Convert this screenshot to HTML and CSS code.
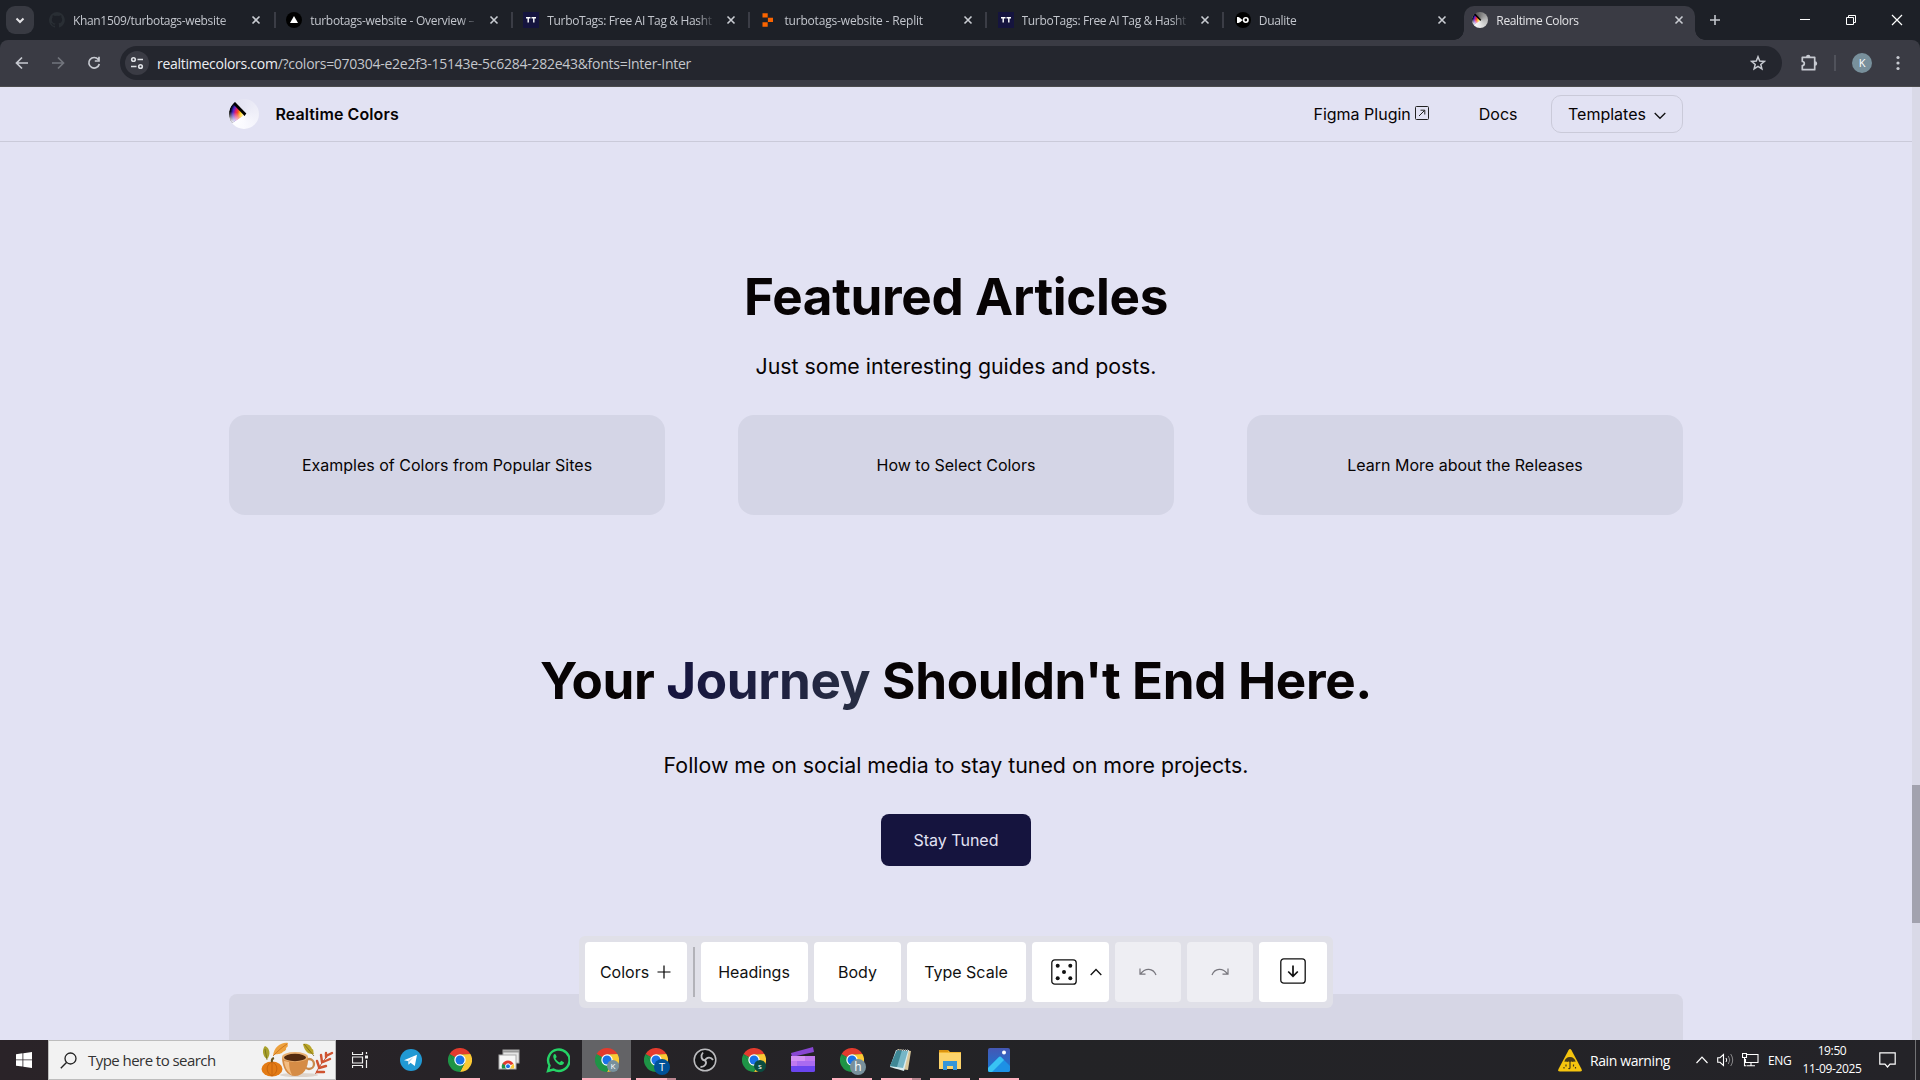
FILE: index.html
```
<!DOCTYPE html>
<html lang="en">
<head>
<meta charset="utf-8">
<title>Realtime Colors</title>
<link rel="stylesheet" href="styles.css">
</head>
<body>
<svg class="defs" width="0" height="0">
  <defs>
    <symbol id="close" viewBox="0 0 16 16"><path d="M4.500 4.500l7 7M11.500 4.500l-7 7" fill="none" stroke="currentColor" stroke-width="1.600"/></symbol>
    <symbol id="chrome" viewBox="0 0 24 24">
      <path d="M12 12 1.600 6A12 12 0 0 1 22.400 6L12 6.500z" fill="#e33b2e"/>
      <path d="M12 12 12 6.500 22.400 6A12 12 0 0 1 12 24L16.800 14.700z" fill="#fcc934"/>
      <path d="M1.600 6A12 12 0 0 0 12 24L16.800 14.800 12 12 7.200 14.700z" fill="#1e9446"/>
      <path d="M1.600 6 12 6.300V12z" fill="#e33b2e"/>
      <path d="M1.600 6 7.200 15.500 12 12z" fill="#1e9446"/>
      <circle cx="12" cy="12" r="5.700" fill="#fff"/><circle cx="12" cy="12" r="4.500" fill="#1a73e8"/>
    </symbol>
    <symbol id="tt" viewBox="0 0 16 16"><rect width="16" height="16" fill="#15143e"/><path d="M3 5.700h4.500M5.200 5.700v4.800M8.500 5.700H13M10.800 5.700v4.800" stroke="#fff" stroke-width="1.400"/></symbol>
    <radialGradient id="spectrum" gradientUnits="userSpaceOnUse" cx="17" cy="15" r="16.500">
      <stop offset=".12" stop-color="#fffbe0"/><stop offset=".34" stop-color="#ffd21a"/><stop offset=".5" stop-color="#f5501e"/><stop offset=".65" stop-color="#e21a6e"/><stop offset=".8" stop-color="#4a27d0"/><stop offset=".93" stop-color="#0b0b3a"/><stop offset="1" stop-color="#000"/>
    </radialGradient>
    <linearGradient id="fade" gradientUnits="userSpaceOnUse" x1="9" y1="9" x2="7" y2="24">
      <stop offset=".3" stop-color="#fff" stop-opacity="0"/><stop offset="1" stop-color="#fafaff"/>
    </linearGradient>
    <symbol id="wheel" viewBox="0 0 30 30">
      <path d="M17 15 5.500 3A15 15 0 0 0 3 24z" fill="url(#spectrum)"/>
      <path d="M17 15 5.500 3A15 15 0 0 0 3 24z" fill="url(#fade)"/>
      <path d="M5.500 2.500 17.300 14.500 15.600 17 4.500 5.500z"/>
    </symbol>
  </defs>
</svg>

<header class="browser">
  <div class="tabs">
    <button class="tab-search"><svg width="12" height="12" viewBox="0 0 12 12"><path d="M2.500 4.500 6 8l3.500-3.500" fill="none" stroke="#e3e3e6" stroke-width="2"/></svg></button>
    <div class="tab"><svg class="fav" viewBox="0 0 16 16"><path fill="#292e34" d="M8 0a8 8 0 0 0-2.500 15.600c.4.100.5-.2.500-.4v-1.500c-2.200.5-2.700-1-2.700-1-.4-1-.9-1.200-.9-1.200-.7-.5.1-.5.1-.5.8.1 1.200.8 1.200.8.700 1.300 1.900.9 2.300.7.100-.5.300-.9.500-1.100-1.800-.2-3.600-.9-3.600-4 0-.9.300-1.600.8-2.100-.1-.2-.4-1 .1-2.100 0 0 .7-.2 2.200.8a7.500 7.500 0 0 1 4 0c1.500-1 2.200-.8 2.200-.8.4 1.100.2 1.900.1 2.100.5.6.8 1.300.8 2.100 0 3.100-1.900 3.700-3.700 4 .3.200.6.700.6 1.500v2.200c0 .2.100.5.600.4A8 8 0 0 0 8 0z"/></svg><span class="tab-title tight">Khan1509/turbotags-website</span><svg class="x"><use href="#close"/></svg></div>
    <div class="tab"><svg class="fav" viewBox="0 0 16 16"><circle cx="8" cy="8" r="8"/><path fill="#fff" d="M8 4l4 7H4z"/></svg><span class="tab-title">turbotags-website - Overview –</span><svg class="x"><use href="#close"/></svg></div>
    <div class="tab"><svg class="fav"><use href="#tt"/></svg><span class="tab-title tight">TurboTags: Free AI Tag &amp; Hasht</span><svg class="x"><use href="#close"/></svg></div>
    <div class="tab"><svg class="fav" viewBox="0 0 16 16"><path fill="#fa6400" d="M2.500 1.200h5.200v4.300H2.500zM7.900 5.700H13V10H7.900zM2.500 10.200h5.200v4.500H2.500z"/></svg><span class="tab-title loose">turbotags-website - Replit</span><svg class="x"><use href="#close"/></svg></div>
    <div class="tab"><svg class="fav"><use href="#tt"/></svg><span class="tab-title tight">TurboTags: Free AI Tag &amp; Hasht</span><svg class="x"><use href="#close"/></svg></div>
    <div class="tab no-sep"><svg class="fav" viewBox="0 0 16 16"><circle cx="8" cy="8" r="8"/><path fill="#fff" d="M2 5c2 0 3 .6 4.500 2.200L8 8l-1.500 1C5 10.500 4 11 2 11z"/><circle cx="10.800" cy="8" r="2.200" fill="none" stroke="#fff" stroke-width="1.600"/></svg><span class="tab-title">Dualite</span><svg class="x"><use href="#close"/></svg></div>
    <div class="tab active"><span class="fav wheel"><svg width="16" height="16"><use href="#wheel"/></svg></span><span class="tab-title">Realtime Colors</span><svg class="x"><use href="#close"/></svg></div>
    <svg class="plus" width="12" height="12" viewBox="0 0 12 12"><path d="M6 1v10M1 6h10" stroke="#c3c6cd" stroke-width="1.600"/></svg>
    <div class="win">
      <svg viewBox="0 0 12 12"><path d="M1 5.500h10" stroke="#fff"/></svg>
      <svg viewBox="0 0 12 12"><path d="M1.500 3.500h7v7h-7zM3.500 3.500v-2h7v7h-2" fill="none" stroke="#fff"/></svg>
      <svg viewBox="0 0 12 12"><path d="M1 1l10 10M11 1 1 11" stroke="#fff" stroke-width="1.200"/></svg>
    </div>
  </div>
  <div class="toolbar">
    <svg class="nav-ic" viewBox="0 0 16 16"><path d="M14 8H3M8 2.500 2.500 8 8 13.500" fill="none" stroke="#c7cad1" stroke-width="1.700"/></svg>
    <svg class="nav-ic" viewBox="0 0 16 16"><path d="M2 8h11M8 2.500 13.500 8 8 13.500" fill="none" stroke="#72757d" stroke-width="1.700"/></svg>
    <svg class="nav-ic" viewBox="0 0 16 16"><path d="M12.300 4.500A5.300 5.300 0 1 0 13.300 9M13 1.800V6H8.800" fill="none" stroke="#c7cad1" stroke-width="1.700"/></svg>
    <div class="omnibox">
      <span class="site-info"><svg width="14" height="14" viewBox="0 0 14 14" fill="none" stroke="#dfe1e5" stroke-width="1.600"><circle cx="3.500" cy="3.500" r="1.800"/><path d="M7.500 3.500H13M1 10.500h5.500"/><circle cx="10.500" cy="10.500" r="1.800"/></svg></span>
      <span class="url"><b>realtimecolors.com</b>/?colors=070304-e2e2f3-15143e-5c6284-282e43&amp;fonts=Inter-Inter</span>
      <svg class="star" viewBox="0 0 16 16"><path d="M8 1.800l1.700 4.300 4.600.3-3.500 3 1.100 4.500L8 11.400l-3.900 2.500 1.100-4.500-3.500-3 4.600-.3z" fill="none" stroke="#c7cad1" stroke-width="1.500"/></svg>
    </div>
    <svg class="ext" viewBox="0 0 18 18"><path d="M2.300 3.300h12.400v12.400H2.300v-4.200a2 2 0 0 0 0-4z" fill="none" stroke="#c7cad1" stroke-width="1.700" stroke-linejoin="round"/><path d="M6 3a2.200 2.200 0 0 1 4.400 0zM15 7.300a2.200 2.200 0 0 1 0 4.400z" fill="#c7cad1"/></svg>
    <span class="bar-sep"></span>
    <span class="avatar">K</span>
    <svg class="dots" viewBox="0 0 4 16" fill="#c7cad1"><circle cx="2" cy="2.500" r="1.600"/><circle cx="2" cy="8" r="1.600"/><circle cx="2" cy="13.500" r="1.600"/></svg>
  </div>
</header>

<div class="viewport">
  <div class="page">
    <nav class="site-nav">
      <span class="logo"><svg width="30" height="30"><use href="#wheel"/></svg></span>
      <span class="brand">Realtime Colors</span>
      <a class="figma">Figma Plugin<svg width="14" height="14" viewBox="0 0 14 14" fill="none" stroke="#222"><rect x=".5" y=".5" width="13" height="13" rx="1"/><path d="M4 10l5.500-5.500M5.500 4.200h4.300v4.300"/></svg></a>
      <a class="docs">Docs</a>
      <a class="templates">Templates<svg width="12" height="8" viewBox="0 0 12 8"><path d="M.7 1 6 6.300 11.300 1" fill="none" stroke="#111" stroke-width="1.300"/></svg></a>
    </nav>
    <main>
      <h2 class="title">Featured Articles</h2>
      <p class="lead">Just some interesting guides and posts.</p>
      <div class="cards"><a>Examples of Colors from Popular Sites</a><a>How to Select Colors</a><a>Learn More about the Releases</a></div>
      <h2 class="title journey">Your <span>Journey</span> Shouldn't End Here.</h2>
      <p class="lead follow">Follow me on social media to stay tuned on more projects.</p>
      <a class="cta">Stay Tuned</a>
      <div class="panel"></div>
    </main>
    <div class="palette">
      <span class="btn colors">Colors<svg width="14" height="14" viewBox="0 0 14 14"><path d="M7 .5v13M.5 7h13" stroke="#000" stroke-width="1.200"/></svg></span>
      <span class="split"></span>
      <span class="btn headings">Headings</span>
      <span class="btn body-font">Body</span>
      <span class="btn scale">Type Scale</span>
      <span class="btn dice"><svg width="26" height="26" viewBox="0 0 26 26"><rect x=".8" y=".8" width="24.400" height="24.400" rx="3" fill="none" stroke="#111" stroke-width="1.300"/><g fill="#111"><circle cx="6.700" cy="6.700" r="2"/><circle cx="19.300" cy="6.700" r="2"/><circle cx="13" cy="13" r="2"/><circle cx="6.700" cy="19.300" r="2"/><circle cx="19.300" cy="19.300" r="2"/></g></svg><svg width="12" height="8" viewBox="0 0 12 8"><path d="M.7 7 6 1.500 11.300 7" fill="none" stroke="#111" stroke-width="1.300"/></svg></span>
      <span class="btn off"><svg width="18" height="9" viewBox="0 0 18 9"><path d="M1 .5v5.700h5.500M1.500 5.800C6-.2 14-.5 17 7" fill="none" stroke="#77767d" stroke-width="1.200"/></svg></span>
      <span class="btn off"><svg width="18" height="9" viewBox="0 0 18 9"><path d="M17 .5v5.700h-5.500M16.500 5.800C12-.2 4-.5 1 7" fill="none" stroke="#77767d" stroke-width="1.200"/></svg></span>
      <span class="btn save"><svg width="26" height="26" viewBox="0 0 26 26" fill="none" stroke="#111"><rect x=".8" y=".8" width="24.400" height="24.400" rx="3" stroke-width="1.300"/><path d="M13 7.500V18M8.200 13.500 13 18.300l4.800-4.800" stroke-width="1.700"/></svg></span>
    </div>
  </div>
  <div class="scroll"><i></i></div>
</div>

<footer class="taskbar">
  <span class="start"><svg width="16" height="16" viewBox="0 0 16 16" fill="#fff"><path d="M0 2.200 6.500 1.300v6.200H0zM7.300 1.200 16 0v7.500H7.300zM0 8.300h6.500v6.300L0 13.800zM7.300 8.300H16V16l-8.700-1.200z"/></svg></span>
  <div class="search">
    <svg width="17" height="17" viewBox="0 0 17 17"><circle cx="10.500" cy="6.500" r="5.500" fill="none" stroke="#222" stroke-width="1.300"/><path d="M6.500 10.500.8 16.200" stroke="#222" stroke-width="1.400"/></svg>
    <span>Type here to search</span>
    <svg class="autumn" width="73" height="36" viewBox="0 0 73 36">
      <path d="M6 17C1 14 1 7 4 4c5 2 6 9 2 13z" fill="#a9a12c"/><path d="M4 7l2 11" stroke="#676516" stroke-width=".7"/>
      <path d="M12 14C13 5 20 0 27 1c-1 3 1 3-2 5 1 3-3 3-4 5-4 2-6 0-9 3z" fill="#eda13d"/><path d="M12 14C17 9 20 6 26 2" stroke="#c66c18" fill="none" stroke-width=".8"/>
      <path d="M53 12c-7 1-10-5-11-10 5-1 8 2 9 5 2 0 1 3 2 5z" fill="#b9a629"/><path d="M43 2l10 12" stroke="#796315" stroke-width=".8"/>
      <path d="M54 33C57 26 62 19 68 12" stroke="#b8452a" stroke-width="1" fill="none"/>
      <path d="M58 25l-2-6M58 26l7-2M61 20l-1-7M62 20l7-3M65 15l0-4M67 13l4-2M56 30l7 0" stroke="#cf5330" stroke-width="2.400" fill="none" stroke-linecap="round"/>
      <ellipse cx="38" cy="33" rx="19" ry="2" fill="#ddd4cc"/><ellipse cx="48" cy="22" rx="5" ry="5" fill="none" stroke="#c98a4b" stroke-width="2.300"/>
      <path d="M21 15c0 11 5 19 13 19s14-8 13-19z" fill="#d58c46"/><path d="M23 19c1 8 5 12 8 14-2-4-3-8-3-13z" fill="#f4bd82"/><ellipse cx="34" cy="15" rx="13" ry="5" fill="#e8af70"/><ellipse cx="34" cy="15.500" rx="11" ry="3.700" fill="#52290e"/>
      <ellipse cx="11" cy="27" rx="10.500" ry="7.500" fill="#e37b15"/><path d="M11 20c-7 3-6 11 0 14 6-3 7-11 0-14zM11 20v14" fill="none" stroke="#c0600c" stroke-width=".8"/><path d="M11 20q-1-3 2-4" stroke="#66531d" stroke-width="2" fill="none"/>
    </svg>
  </div>
  <span class="task-view"><svg width="17" height="16" viewBox="0 0 17 16"><path d="M.5 0v2.500h10V0M.5 16v-2.500h10V16M.5 5h10v6H.5zM14.500 0v2M14.500 8v8" fill="none" stroke="#eee" stroke-width="1.200"/><rect x="13" y="3.500" width="3" height="3" fill="#eee"/></svg></span>
  <div class="apps">
    <span><svg width="22" height="22" viewBox="0 0 22 22"><circle cx="11" cy="11" r="11" fill="#2199d3"/><path d="M4 11.200 17 5.700l-2.200 11.300-4.300-3.200-2 1.900-.6-3.600z" fill="#fff"/><path d="M8 12.100l5.500-4-4 4.600-.9 2.900z" fill="#a9cfe4"/></svg></span>
    <span class="open"><svg width="24" height="24"><use href="#chrome"/></svg></span>
    <span><svg width="22" height="22" viewBox="0 0 22 22"><rect x="5" y="1" width="16" height="13" fill="#e5e5e5" stroke="#aaa"/><path d="M5 2.500h16" stroke="#999" stroke-width="2"/><rect x="1" y="6" width="17" height="14" fill="#f7f7f7" stroke="#aaa"/><path d="M4 19.500a6 6 0 0 1 1.500-6l4 6z" fill="#1e9446"/><path d="M4.500 15a6 6 0 0 1 11 0l-5.500 2z" fill="#e33b2e"/><path d="M15.500 14.500a6 6 0 0 1 .5 5h-5z" fill="#fcc934"/><circle cx="10" cy="17.300" r="2.500" fill="#1a73e8" stroke="#fff"/></svg></span>
    <span><svg width="24" height="26" viewBox="0 0 24 26"><path d="M2 24l1.500-5.500A10.700 10.700 0 1 1 7.500 22.500z" fill="none" stroke="#25d366" stroke-width="2.400"/><path d="M8.500 7c-4 3 3 11.500 7 11 2.500-.5 2.700-2.500 2.300-2.800l-2.500-1.400-1.600 1.700c-2-.8-3.300-2-4.200-3.900l1.200-1.500-1-2.700z" fill="#25d366"/></svg></span>
    <span class="open current"><svg width="24" height="24"><use href="#chrome"/></svg><em class="k">K</em></span>
    <span class="open many"><svg width="24" height="24"><use href="#chrome"/></svg><em class="t">T</em></span>
    <span><svg width="24" height="24" viewBox="0 0 24 24"><circle cx="12" cy="12" r="10.800" fill="#151517" stroke="#bcbcbf" stroke-width="1.500"/><path d="M12 12.500C8.500 12 7 8 10 4.500M12 12.500c1.500-3.500 6-4 8-.5M12 12.500c2.500 2.500 0 6.500-4.500 6.500" fill="none" stroke="#bcbcbf" stroke-width="1.800"/></svg></span>
    <span><svg width="24" height="24"><use href="#chrome"/></svg><em class="s">s</em></span>
    <span><svg width="24" height="26" viewBox="0 0 24 26"><path d="M0 6 22 0l1 5L1 10z" fill="#8846d3"/><rect y="9" width="24" height="16" rx="1.500" fill="#6a45ee"/><path d="M0 9h24v5H0z" fill="#d391f4"/><path d="M0 14h24v5H0z" fill="#a96bf0"/><path d="M0 14h6v5H0zM14 9h10v5H14z" fill="#c079ef"/></svg></span>
    <span class="open"><svg width="24" height="24"><use href="#chrome"/></svg><em class="h">h</em></span>
    <span class="open many"><svg width="24" height="24" viewBox="0 0 24 24"><path d="M9 1 22 3 19 22 4 20z" fill="#d8c79b"/><path d="M7 2 20 2 15 23 1 19z" fill="#d9edf0"/><path d="M8 2 19 3 14 20 1 18z" fill="#76b6c6"/><path d="M8 2l5 0-5 17-7-1z" fill="#3f8795"/><path d="M8 2h12" stroke="#777" stroke-width="2" stroke-dasharray="1"/></svg></span>
    <span class="open"><svg width="22" height="20" viewBox="0 0 22 20"><path d="M0 0h9l2 2h11v17H0z" fill="#f2b632"/><path d="M0 3h22v16H0z" fill="#fcd36b"/><path d="M0 0h9v2H0z" fill="#db9310"/><path d="M4 20v-9h14v9h-4v-4H8v4z" fill="#3495d9"/></svg></span>
    <span class="open"><svg width="22" height="24" viewBox="0 0 22 24"><defs><linearGradient id="ph" x2="0" y2="1"><stop stop-color="#4557b4"/><stop offset="1" stop-color="#1679d6"/></linearGradient></defs><rect width="22" height="24" rx="2" fill="url(#ph)"/><path d="M0 20 11 9q1-1 2 0l9 9v4q0 2-2 2H2q-2 0-2-2z" fill="#1d91e5"/><path d="M0 20 11 9q1-1 2 0l3 3L4 24H2q-2 0-2-2z" fill="#39c3f3"/><circle cx="16" cy="4.500" r="2" fill="#fff"/></svg></span>
  </div>
  <div class="tray">
    <svg class="warn" width="24" height="23" viewBox="0 0 24 23"><path d="M10.500 1.200q1.500-2.200 3 0L23.500 20q1 2.500-1.500 2.500H2Q-.500 22.500.500 20z" fill="#f6c50e"/><path d="M6.500 13a5.500 5 0 0 1 11 0q-1.500-1-2.700 0-1.300-1-2.800 0-1.500-1-2.800 0-1.200-1-2.700 0z" fill="#45391b"/><path d="M12 12v6.500q0 1.500-1.700 1M8 15.500v2M15.500 15.500v2M17.500 18v1.500M6 18v1.500" stroke="#45391b" stroke-width="1.200" fill="none"/></svg>
    <span class="rain">Rain warning</span>
    <svg class="chev" width="12" height="8" viewBox="0 0 12 8"><path d="M.5 7 6 1.200 11.500 7" stroke="#fff" stroke-width="1.200" fill="none"/></svg>
    <svg class="spk" width="17" height="14" viewBox="0 0 17 14" fill="none"><path d="M.7 4.700H3L6.500 1.500v11L3 9.300H.7z" stroke="#fff" stroke-width="1.100"/><path d="M9 5q1.500 2 0 4" stroke="#fff"/><path d="M11.300 3q3 4 0 8M13.700 1q4 6 0 12" stroke="#8a898b"/></svg>
    <svg class="net" width="17" height="14" viewBox="0 0 17 14" fill="none" stroke="#fff" stroke-width="1.100"><path d="M5 1.500h11v8H3.500V6M5 12.800h8M9 9.500v3.300M.5.500h4v4h-4zM2.500 4.500v8.300h2"/></svg>
    <span class="lang">ENG</span>
    <span class="clock"><span>19:50</span><span>11-09-2025</span></span>
    <svg class="note" width="17" height="16" viewBox="0 0 17 16"><path d="M.8.800h15.400v11.400H11L8.500 15 6 12.200H.8z" fill="none" stroke="#fff" stroke-width="1.200"/></svg>
    <span class="peek"></span>
  </div>
</footer>
</body>
</html>
```
FILE: styles.css
```
* { box-sizing: border-box; }
body { margin: 0; width: 1920px; height: 1080px; overflow: hidden; display: flex; flex-direction: column; background: #e2e2f3; font-family: Inter, sans-serif; font-size: 16px; color: #070304; }
.defs { position: absolute; }
svg { display: block; flex: none; }

/* Browser chrome */
.browser { height: 87px; flex: none; background: #1d2027; font-family: "Open Sans", sans-serif; }
.tabs { height: 40px; display: flex; align-items: center; padding-left: 6px; }
.tab-search { width: 28px; height: 28px; border: 0; border-radius: 9px; background: #383a42; padding: 0; margin-right: 3.500px; display: grid; place-items: center; }
.tab { width: 237.150px; height: 40px; flex: none; display: flex; align-items: center; padding: 0 10.200px 0 11.500px; position: relative; color: #c3c6cd; }
.tab::after { content: ""; position: absolute; right: -1px; top: 12px; width: 2px; height: 16px; background: #3b3d46; }
.tab.no-sep::after, .tab.active::after { display: none; }
.fav { width: 16px; height: 16px; margin-right: 8px; flex: none; }
.tab-title { flex: 1; font-size: 12px; line-height: 18px; letter-spacing: -.28px; white-space: nowrap; margin-right: 8px; padding-top: 1px; -webkit-mask-image: linear-gradient(90deg, #000 calc(100% - 18px), transparent); mask-image: linear-gradient(90deg, #000 calc(100% - 18px), transparent); }
.tab-title.tight { letter-spacing: -.34px; }
.tab-title.loose { letter-spacing: -.18px; }
.x { width: 16px; height: 16px; color: #c9ccd2; }
.tab.active { width: 231px; height: 34px; margin: 6px 0 0 4px; padding: 0 8px; background: #3a3b44; border-radius: 10px 10px 0 0; color: #e3e3e6; padding-bottom: 6px; }
.tab.active .tab-title { letter-spacing: -.37px; }
.tab.active::before, .tab.active::after { content: ""; display: block; position: absolute; width: 10px; height: 10px; top: auto; bottom: 0; background: radial-gradient(circle at 0 0, transparent 9.500px, #3a3b44 10px); }
.tab.active::before { left: -10px; }
.tab.active::after { right: -10px; background: radial-gradient(circle at 100% 0, transparent 9.500px, #3a3b44 10px); }
.wheel { border-radius: 50%; overflow: hidden; background: conic-gradient(#777, #bbb 25%, #e8e8e8 50%, #fff 70%, #555 90%, #777); }
.plus { margin-left: 14px; }
.win { margin-left: auto; display: flex; gap: 34px; padding-right: 17px; }
.win svg { width: 12px; height: 12px; }
.toolbar { height: 47px; background: #3a3b44; border-bottom: 1px solid #4b4b4d; border-radius: 8px 8px 0 0; display: flex; align-items: center; padding: 0 20px 0 14px; }
.nav-ic { width: 16px; height: 16px; margin-right: 20px; }
.omnibox { width: 1662px; height: 34px; margin-left: -2px; border-radius: 17px; background: #24262e; display: flex; align-items: center; padding: 0 16px 0 5px; }
.site-info { width: 24px; height: 24px; border-radius: 50%; background: #3a3b44; display: grid; place-items: center; margin-right: 8px; }
.url { flex: 1; font-size: 14px; letter-spacing: -.27px; color: #c5c7cc; white-space: nowrap; }
.url b { font-weight: 400; color: #eceef2; }
.star { width: 16px; height: 16px; }
.ext { width: 18px; height: 18px; margin-left: 18px; }
.bar-sep { width: 2px; height: 16px; background: #50525b; margin: 0 16px 0 16px; }
.avatar { width: 20px; height: 20px; border-radius: 50%; background: #78909c; color: #fff; font-size: 11px; line-height: 20px; text-align: center; }
.dots { width: 4px; height: 16px; margin-left: 24px; }

/* Page */
.viewport { height: 953px; display: flex; position: relative; }
.page { width: 1912px; height: 953px; }
.scroll { width: 8px; background: #d9d9e7; padding-top: 698px; }
.scroll i { display: block; height: 138px; background: #a2a2ae; }
.site-nav { height: 55px; border-bottom: 1px solid #cacad9; padding: 0 229px; display: flex; align-items: center; }
.logo { width: 30px; height: 30px; border-radius: 50%; overflow: hidden; margin-right: 16.500px; background: conic-gradient(#e6e6f4, #f0f0f9 25%, #fafaff 50%, #fff 70%, #e4e4f2 88%, #e6e6f4); }
.brand { font-weight: 600; letter-spacing: .1px; margin-right: auto; }
.figma { display: flex; gap: 4px; margin-right: 50px; }
.figma svg { margin-top: 2px; }
.docs { margin-right: 33.500px; }
.templates { width: 132px; height: 38px; border: 1px solid #cacad9; border-radius: 10px; display: flex; align-items: center; gap: 8px; padding-left: 16px; }
.templates svg { margin-top: 4px; }
main { height: 898px; padding: 119px 229px 0; display: flex; flex-direction: column; align-items: center; }
.title { margin: 0; font-size: 51.200px; line-height: 70px; font-weight: 700; letter-spacing: -.37px; white-space: nowrap; }
.lead { margin: 19px 0 0; font-size: 21.330px; line-height: 32px; white-space: nowrap; }
.cards { width: 1454px; display: grid; grid-template-columns: repeat(3, 436px); justify-content: space-between; margin-top: 33px; }
.cards a { height: 100px; border-radius: 16px; background: #d4d5e6; display: grid; place-items: center; }
.journey { margin-top: 130px; }
.journey span { background: linear-gradient(90deg, #15143e, #282e43); -webkit-background-clip: text; background-clip: text; color: transparent; }
.follow { margin-top: 34px; }
.cta { width: 150px; height: 52px; margin-top: 33px; border-radius: 8px; background: #15143e; color: #e2e2f3; display: grid; place-items: center; flex: none; }
.panel { width: 1454px; height: 46px; flex: none; margin-top: 128px; border-radius: 8px 8px 0 0; background: #d6d6e5; }
.palette { position: absolute; left: 579px; top: 849px; width: 754px; height: 72px; padding: 6px; border-radius: 6px; background: #e0e0e8; display: flex; gap: 6px; align-items: center; color: #111; }
.btn { height: 60px; border-radius: 4px; background: #fff; display: flex; align-items: center; justify-content: center; flex: none; white-space: nowrap; }
.colors { width: 102px; gap: 8px; padding-right: 1px; }
.split { width: 2px; height: 50px; background: #b2b2b8; margin-bottom: 1px; }
.headings { width: 107px; padding-right: 1px; }
.body-font { width: 87px; }
.scale { width: 119px; padding-right: 1px; }
.dice { width: 77px; gap: 13px; padding-left: 12px; }
.off { width: 66px; background: #eeeef3; }
.save { width: 68px; }
.save svg { margin-bottom: 2px; }

/* Taskbar */
.taskbar { height: 40px; background: linear-gradient(90deg, #2a2328, #262327 30%, #232326 55%, #242328); display: flex; color: #fff; font-family: "Open Sans", sans-serif; }
.start { width: 48px; display: grid; place-items: center; }
.search { width: 288px; border: 1px solid #bdbdbd; background: #f2f2f2; color: #333; display: flex; align-items: center; padding-left: 11px; font-size: 15px; letter-spacing: -.55px; }
.search span { margin-left: 11px; width: 173px; white-space: nowrap; }
.task-view { width: 50px; display: grid; place-items: center; padding-right: 1px; }
.apps { display: flex; }
.apps > span { width: 49px; height: 40px; display: grid; place-items: center; position: relative; }
.apps .open::after { content: ""; position: absolute; left: 5px; right: 4px; bottom: 0; height: 2px; background: #ffb1bf; }
.apps .current { background: #636366; }
.apps .current::after { left: 0; right: 0; }
.apps .many::after { background: linear-gradient(90deg, #ffb1bf 31px, #bb8590 31px); }
.apps em { position: absolute; left: 23px; top: 19px; width: 16px; height: 16px; border-radius: 50%; background: #78909c; font: 9px/16px "Open Sans", sans-serif; text-align: center; }
.apps .k, .apps .s { width: 12px; height: 12px; line-height: 12px; top: 20px; left: 25px; font-size: 8px; }
.apps .t { background: #015198; font-size: 11px; }
.apps .s { background: #0a4c40; }
.apps .h { font-size: 12px; }
.tray { margin-left: auto; display: flex; align-items: center; }
.rain { width: 112px; margin-left: 8px; font-size: 14px; letter-spacing: -.4px; white-space: nowrap; }
.chev { margin-left: -6px; }
.spk { margin-left: 9px; }
.net { margin-left: 8px; }
.lang { font-size: 12px; width: 24px; margin-left: 9px; letter-spacing: -.3px; }
.clock { width: 60px; margin-left: 10px; display: flex; flex-direction: column; align-items: center; font-size: 12px; line-height: 18px; letter-spacing: -.38px; white-space: nowrap; }
.note { margin-left: 17px; }
.peek { width: 5px; height: 40px; margin-left: 19px; border-left: 1px solid #727275; }
```
